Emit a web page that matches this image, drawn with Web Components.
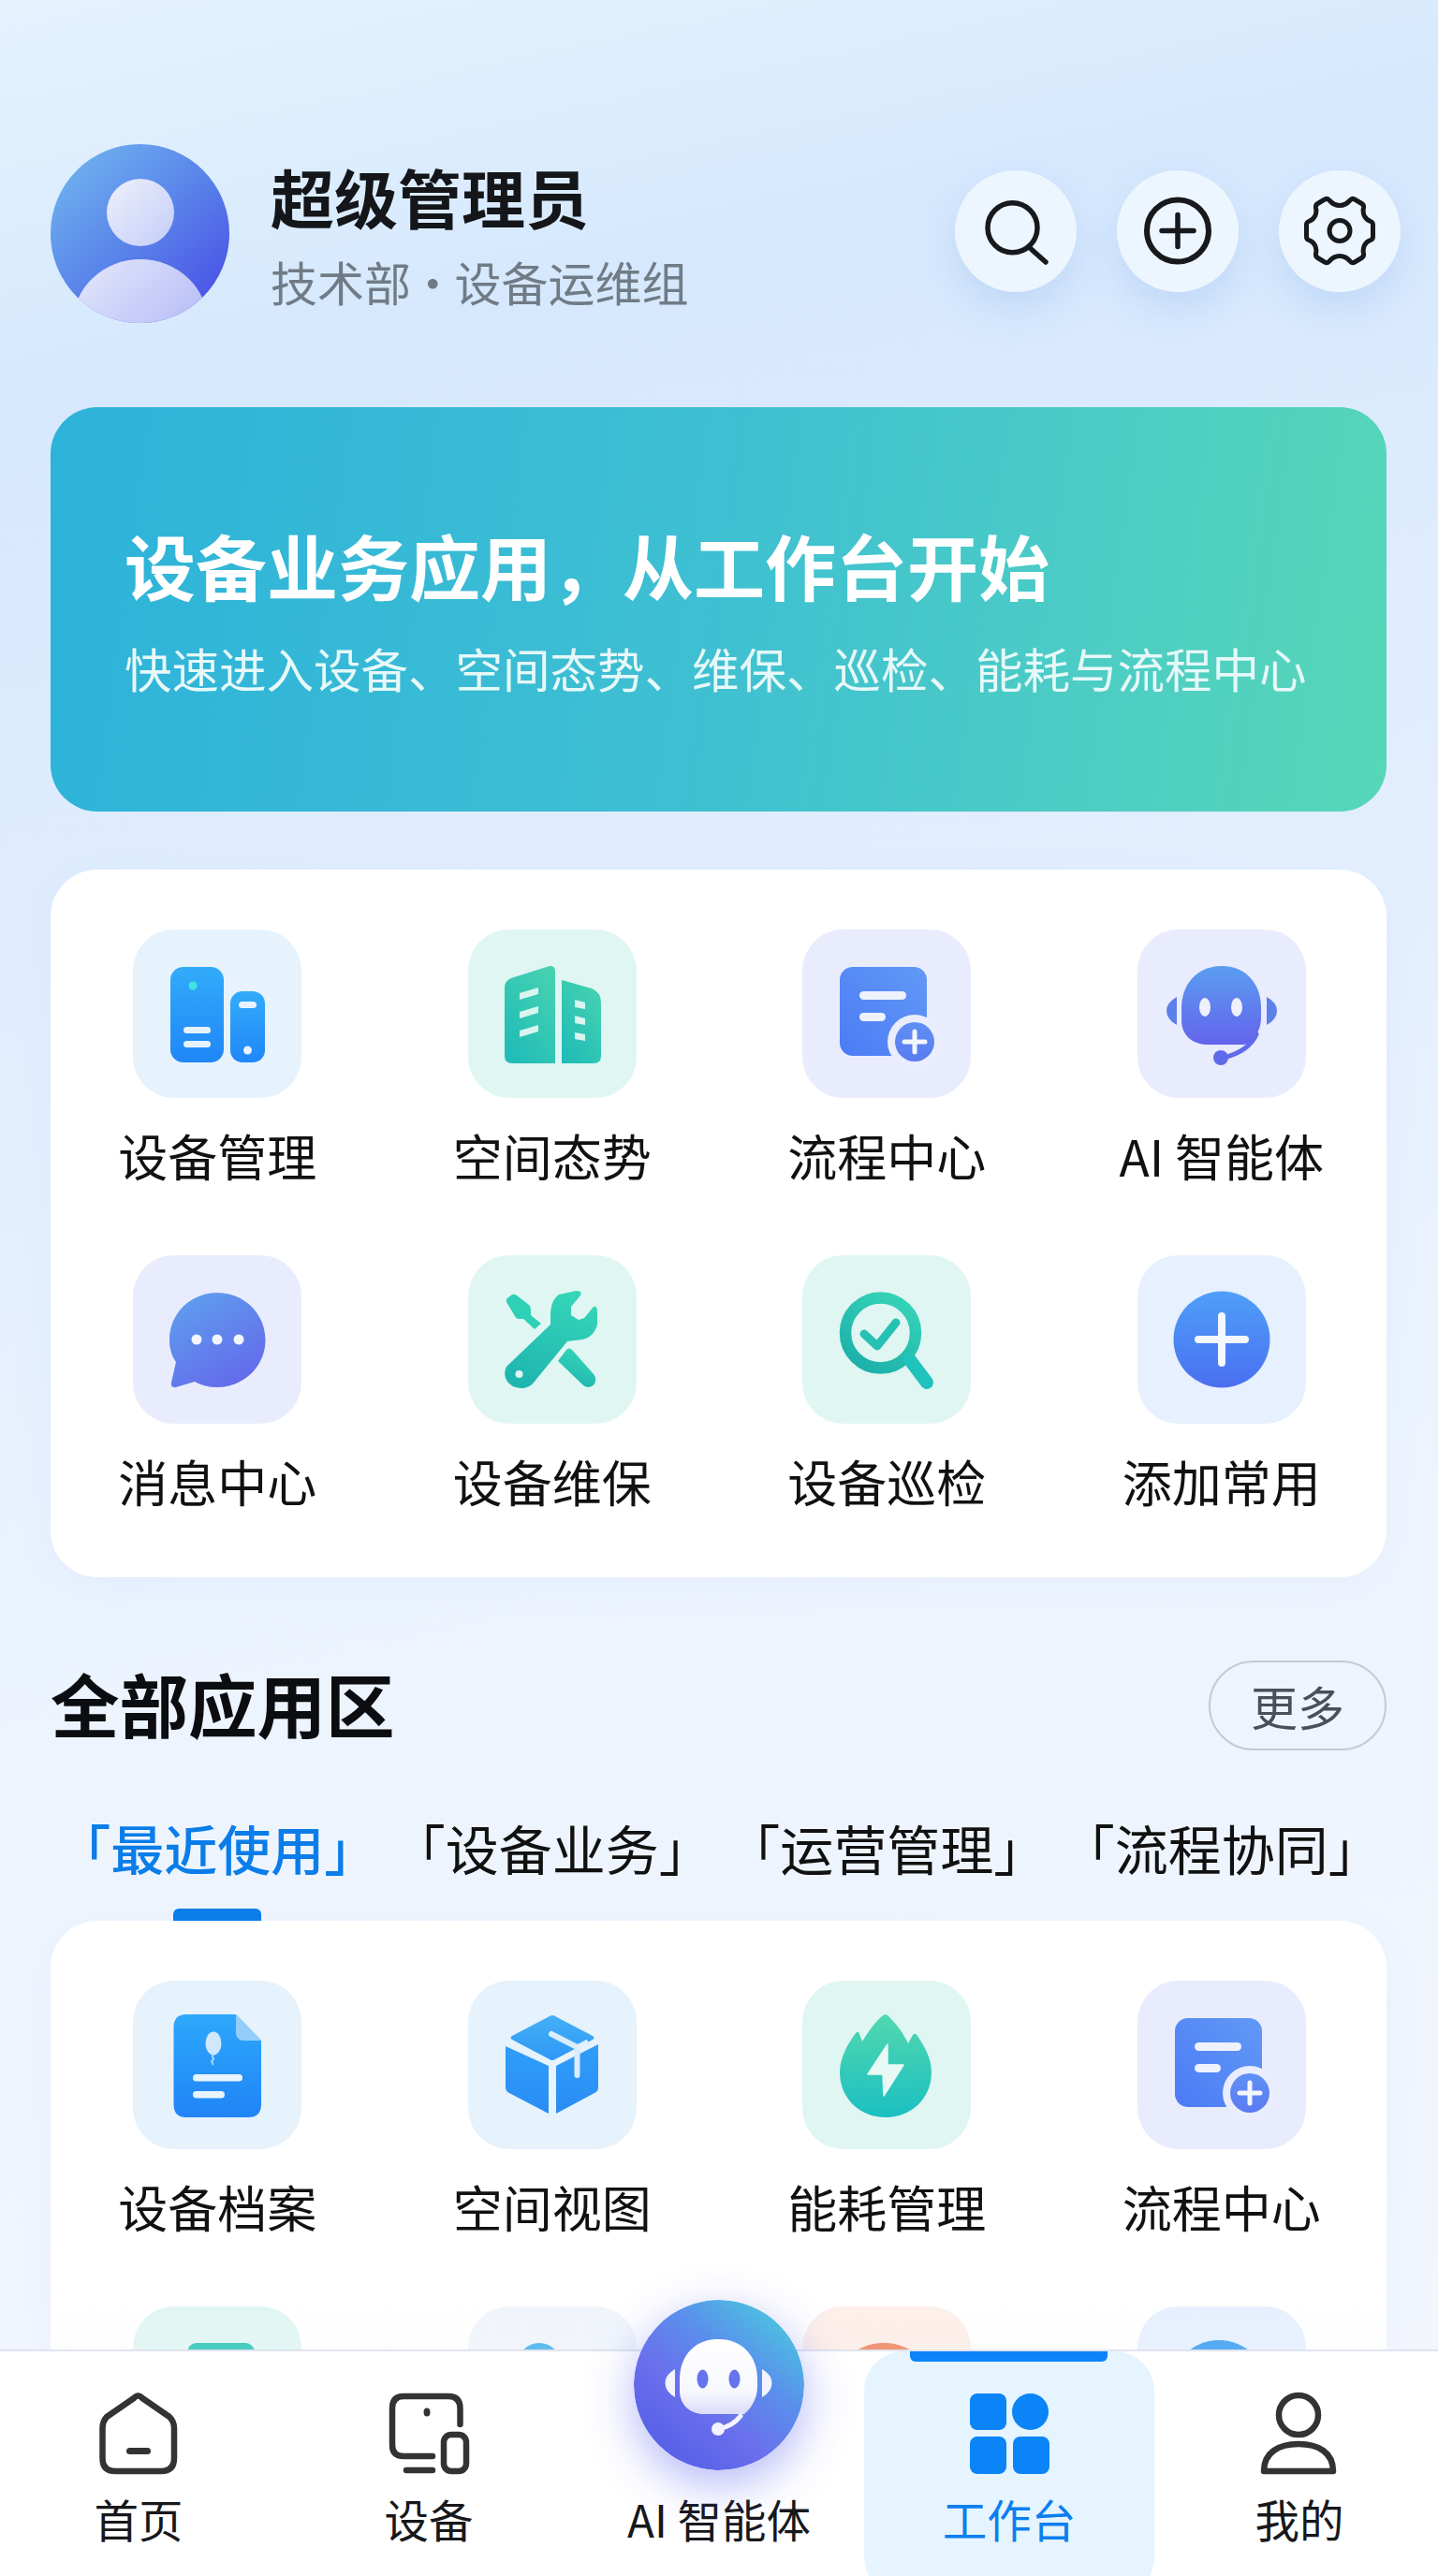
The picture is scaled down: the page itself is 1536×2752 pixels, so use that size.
<!DOCTYPE html>
<html lang="zh">
<head>
<meta charset="utf-8">
<title>工作台</title>
<style>
  html, body { margin: 0; padding: 0; }
  body { font-family: "Noto Sans CJK SC", "Liberation Sans", sans-serif; color: #111; }
</style>
</head>
<body>
<work-page>
  <user-head name="超级管理员" dept="技术部 · 设备运维组"></user-head>
  <hero-banner title="设备业务应用，从工作台开始" sub="快速进入设备、空间态势、维保、巡检、能耗与流程中心"></hero-banner>
  <tile-card class="first">
    <app-tile icon="device" tone="blue">设备管理</app-tile>
    <app-tile icon="building" tone="teal">空间态势</app-tile>
    <app-tile icon="flow" tone="violet">流程中心</app-tile>
    <app-tile icon="robot" tone="violet">AI 智能体</app-tile>
    <app-tile icon="chat" tone="violet">消息中心</app-tile>
    <app-tile icon="tools" tone="teal">设备维保</app-tile>
    <app-tile icon="inspect" tone="teal">设备巡检</app-tile>
    <app-tile icon="add" tone="sky">添加常用</app-tile>
  </tile-card>
  <section-head title="全部应用区" action="更多"></section-head>
  <tab-bar>
    <tab-item active>「最近使用」</tab-item>
    <tab-item>「设备业务」</tab-item>
    <tab-item>「运营管理」</tab-item>
    <tab-item>「流程协同」</tab-item>
  </tab-bar>
  <tile-card>
    <app-tile icon="archive" tone="blue">设备档案</app-tile>
    <app-tile icon="box" tone="blue">空间视图</app-tile>
    <app-tile icon="flame" tone="teal">能耗管理</app-tile>
    <app-tile icon="flow" tone="violet">流程中心</app-tile>
    <app-tile icon="peek1" tone="teal"></app-tile>
    <app-tile icon="peek2" tone="pale"></app-tile>
    <app-tile icon="peek3" tone="peach"></app-tile>
    <app-tile icon="peek4" tone="sky"></app-tile>
  </tile-card>
  <bottom-nav>
    <nav-item icon="home">首页</nav-item>
    <nav-item icon="devices">设备</nav-item>
    <nav-item icon="ai">AI 智能体</nav-item>
    <nav-item icon="grid" active>工作台</nav-item>
    <nav-item icon="user">我的</nav-item>
  </bottom-nav>
</work-page>

<script>
const grad = (id, a, b, x1 = 0, y1 = 0, x2 = 0, y2 = 1) => `
  <linearGradient id="${id}" x1="${x1}" y1="${y1}" x2="${x2}" y2="${y2}">
    <stop offset="0" stop-color="${a}"/><stop offset="1" stop-color="${b}"/>
  </linearGradient>`

const robotHead = 'M90 39C115 39 132 57 132 84V94C132 103 129 110 124 117C121 121 117 123 112 123H74C58 123 47 112 47 97V84C47 57 65 39 90 39Z'
const flowDoc = `
  <defs>${grad('a', '#4c7bf5', '#6199f6', 0, 1, 1, 0)}${grad('b', '#5f90f5', '#5a7bf1')}</defs>
  <rect x="40" y="40" width="93" height="95" rx="14" fill="url(#a)"/>
  <rect x="61" y="66" width="50" height="9" rx="4.5" fill="#eef2fd"/>
  <rect x="61" y="89" width="28" height="9" rx="4.5" fill="#eef2fd"/>
  <circle cx="120" cy="120" r="29" fill="#e9edfd"/>
  <circle cx="120" cy="120" r="21" fill="url(#b)"/>
  <path d="M109 120H131M120 109V131" stroke="#f3f6fe" stroke-width="5" stroke-linecap="round"/>`

// every icon is drawn on a 180 box, the same size as its tile
const icons = {
  device: `
    <defs>${grad('a', '#33abfa', '#2086f7')}</defs>
    <rect x="40" y="40" width="57" height="102" rx="14" fill="url(#a)"/>
    <rect x="104" y="66" width="37" height="76" rx="13" fill="url(#a)"/>
    <circle cx="64" cy="60" r="4.5" fill="#3fe3e2"/>
    <rect x="54" y="104" width="29" height="7" rx="3.5" fill="#e6f3fe"/>
    <rect x="54" y="119" width="29" height="7" rx="3.5" fill="#e6f3fe"/>
    <rect x="113" y="77" width="19" height="7" rx="3.5" fill="#e6f3fe"/>
    <circle cx="122.500" cy="129" r="4.5" fill="#e6f3fe"/>`,
  building: `
    <defs>${grad('a', '#49d4b0', '#22bdb7', 1, 0, 0.3, 1)}</defs>
    <path d="M39 62Q39 55 46 52L87 39Q93 38 93 45V143H47Q39 143 39 135Z" fill="url(#a)"/>
    <path d="M100 54L132 63Q142 67 142 78V135Q142 143 134 143H100Z" fill="url(#a)"/>
    <g fill="#d9f5ef">
      <path d="M55 68L75 62V69L55 75Z"/><path d="M55 88L75 82V89L55 95Z"/><path d="M55 108L75 102V109L55 115Z"/>
      <path d="M114 75L125 78V85L114 83Z"/><path d="M114 92L125 95V102L114 100Z"/><path d="M114 110L125 112V119L114 117Z"/>
    </g>`,
  flow: flowDoc,
  robot: `
    <defs>${grad('a', '#5b9df0', '#6464ec')}${grad('b', '#5a90ee', '#5d6cea')}</defs>
    <path d="M42 72V102Q31 96 31 87Q31 78 42 72Z" fill="#5c80ea"/>
    <path d="M138 72V102Q149 96 149 87Q149 78 138 72Z" fill="#5c80ea"/>
    <path d="${robotHead}" fill="url(#a)"/>
    <path d="M127 112Q119 130 92 137" fill="none" stroke="#5f6bea" stroke-width="5" stroke-linecap="round"/>
    <circle cx="89" cy="137" r="8" fill="#5f6bea"/>
    <ellipse cx="72" cy="83" rx="6" ry="10" fill="#eef0fd"/>
    <ellipse cx="106" cy="83" rx="6" ry="10" fill="#eef0fd"/>`,
  chat: `
    <defs>${grad('a', '#5f9eef', '#6467ea', 0.2, 0, 0.8, 1)}</defs>
    <path d="M90 40C118 40 141.500 62 141.500 90.500S118 141 90 141C81 141 73 139 66 135L46 141Q40 142 41 136L46 114C41 107 39 99 39 90.500C39 62 62 40 90 40Z" fill="url(#a)"/>
    <circle cx="68" cy="90" r="5.5" fill="#f2f5fe"/><circle cx="90" cy="90" r="5.5" fill="#f2f5fe"/><circle cx="113" cy="90" r="5.5" fill="#f2f5fe"/>`,
  tools: `
    <defs>${grad('a', '#35d6b8', '#1fb5b0', 0.7, 0, 0.3, 1)}</defs>
    <path d="M41 119L88 74V64C88 54 91 46 97 42L115 38Q123 38 120 43L110 55V64L118 69L124 67L134 55Q138 54 138 60V74C136 82 130 89 122 90L106 92L70 136C62 146 44 143 40 131Q38 125 41 119Z" fill="url(#a)"/>
    <circle cx="54.500" cy="127" r="4" fill="#dff6f2"/>
    <path d="M41 50Q40 47 43 45L47 42Q50 41 52 43L65 53Q67 55 67 58L67 64L78 73L71 79L59 68H53Q51 67 50 65Z" fill="#2fd0b6"/>
    <path d="M96 113L105 101Q108 98 111 101L134 127C141 136 130 146 122 138L96 113Z" fill="url(#a)"/>`,
  inspect: `
    <defs>${grad('a', '#35d3b8', '#1cb0a9', 0.8, 0, 0.2, 1)}</defs>
    <circle cx="83.500" cy="83" r="37.500" fill="none" stroke="url(#a)" stroke-width="12.500"/>
    <path d="M115 112L133 136" stroke="#1fc3bb" stroke-width="14" stroke-linecap="round"/>
    <path d="M66 84L80 97L100 72" fill="none" stroke="#27c1b3" stroke-width="9" stroke-linecap="round" stroke-linejoin="round"/>`,
  add: `
    <defs>${grad('a', '#4f9ff9', '#4a6ff0')}</defs>
    <circle cx="90" cy="90" r="51.500" fill="url(#a)"/>
    <path d="M65 90H115M90 65V115" stroke="#f3f7fe" stroke-width="8" stroke-linecap="round"/>`,
  archive: `
    <defs>${grad('a', '#2da8fb', '#2084f7')}</defs>
    <path d="M57 36H110L137 64V132Q137 146 123 146H57Q43.500 146 43.500 132V50Q43.500 36 57 36Z" fill="url(#a)"/>
    <path d="M110 36L137 64H119Q110 64 110 55Z" fill="#93cdfa"/>
    <ellipse cx="86" cy="67" rx="8.500" ry="12.500" fill="#cfe8fd"/>
    <path d="M86 79C82 82 89 83 85 85C82 87 87 88 85 90" fill="none" stroke="#cfe8fd" stroke-width="1.500"/>
    <rect x="64" y="100" width="53" height="7.500" rx="3.700" fill="#e8f4fe"/>
    <rect x="64" y="118" width="34" height="7.500" rx="3.700" fill="#e8f4fe"/>`,
  box: `
    <defs>${grad('a', '#44b0f6', '#2e97f6')}${grad('b', '#2f9ef8', '#2a8cf5')}</defs>
    <path d="M87 38Q90 36 93 38L133 59Q136 61 133 63L93 84Q90 86 87 84L47 63Q44 61 47 59Z" fill="url(#a)"/>
    <path d="M40 70L86 91V142L44 120Q40 118 40 114Z" fill="url(#b)"/>
    <path d="M94 91L139 68V114Q139 118 135 120L94 142Z" fill="url(#b)"/>
    <path d="M89 57L116.500 71V101" fill="none" stroke="#d9edfc" stroke-width="6" stroke-linecap="round" stroke-linejoin="round"/>
    <path d="M116.500 71L128 65" stroke="#e2f1fc" stroke-width="5"/>`,
  flame: `
    <defs>${grad('a', '#52d8ae', '#1bbfc2')}</defs>
    <path d="M88 36Q91 36 94 40C101 47 108 56 113 67L118 58Q121 55 123 59C131 71 138 83 138 98C138 125 117 146 89 146C61 146 40 125 40 98C40 83 48 68 57 56Q60 53 61 57L64 65C70 55 78 44 85 38Z" fill="url(#a)"/>
    <path d="M91 68L70 100H86L87 123L108 90H91Z" fill="#e9f9f5" stroke="#e9f9f5" stroke-width="1.500" stroke-linejoin="round"/>`,
  peek1: '<rect x="58" y="39" width="72" height="120" rx="10" fill="#2ec4b6"/>',
  peek2: '<circle cx="76" cy="62" r="23" fill="#46b2ea"/>',
  peek3: '<circle cx="87" cy="97" r="58" fill="#ee8560"/>',
  peek4: '<circle cx="87" cy="88" r="52" fill="#3c9ff2"/>'
}

class IconArt extends HTMLElement {
  connectedCallback() {
    const name = this.getAttribute('name')
    this.attachShadow({mode: 'open'}).innerHTML = `
      <style>:host { display: block; width: 100%; height: 100%; } svg { display: block; width: 100%; height: 100%; }</style>
      <svg viewBox="0 0 180 180" xmlns="http://www.w3.org/2000/svg">${icons[name]}</svg>
    `
  }
}

class WorkPage extends HTMLElement {
  connectedCallback() {
    this.attachShadow({mode: 'open'}).innerHTML = `
      <style>
        :host {
          display: block;
          position: relative;
          width: 1536px;
          height: 2752px;
          overflow: hidden;
          box-sizing: border-box;
          padding: 154px 55px 0 54px;
          background: linear-gradient(168deg, #e4f3fe 0%, #d6e8fd 14%, #e0edfe 34%, #edf4fe 62%, #f3f6fd 100%);
        }
      </style>
      <slot></slot>
    `
  }
}

class UserHead extends HTMLElement {
  connectedCallback() {
    const btn = (inner) => `<div class="btn"><svg viewBox="0 0 84 84" fill="none" stroke="#17191d" stroke-linecap="round">${inner}</svg></div>`
    this.attachShadow({mode: 'open'}).innerHTML = `
      <style>
        :host { display: flex; align-items: center; margin: 0 -15px 90px 0; height: 191px; }
        .avatar { width: 191px; height: 191px; flex: none; }
        .info { margin-left: 44px; flex: 1; }
        .name { font-size: 68px; line-height: 90px; font-weight: 700; color: #14161a; }
        .dept { font-size: 50px; line-height: 70px; color: #707b86; margin-top: 10px; word-spacing: -13px; }
        .btns { display: flex; gap: 43px; margin-top: -6px; }
        .btn {
          width: 130px; height: 130px; border-radius: 50%;
          background: #edf6fe;
          box-shadow: 0 18px 40px rgba(128, 172, 232, .28);
          display: flex; align-items: center; justify-content: center;
        }
        .btn svg { width: 84px; height: 84px; }
      </style>
      <svg class="avatar" viewBox="0 0 191 191">
        <defs>
          <linearGradient id="bg" x1="0.1" y1="0.05" x2="0.9" y2="0.9">
            <stop offset="0" stop-color="#70b2ef"/><stop offset=".5" stop-color="#5a85ea"/><stop offset="1" stop-color="#4a52e6"/>
          </linearGradient>
          <linearGradient id="head" x1="0" y1="0" x2="1" y2="1"><stop offset="0" stop-color="#eef0fb"/><stop offset="1" stop-color="#c3cdf8"/></linearGradient>
          <linearGradient id="body" x1="0" y1="0" x2="1" y2="1"><stop offset="0" stop-color="#e6e9fb"/><stop offset="1" stop-color="#a4abf5"/></linearGradient>
          <clipPath id="clip"><circle cx="95.500" cy="95.500" r="95.500"/></clipPath>
        </defs>
        <circle cx="95.500" cy="95.500" r="95.500" fill="url(#bg)"/>
        <circle cx="96" cy="73" r="36" fill="url(#head)"/>
        <ellipse cx="96" cy="191" rx="72" ry="68" fill="url(#body)" clip-path="url(#clip)"/>
      </svg>
      <div class="info">
        <div class="name">${this.getAttribute('name')}</div>
        <div class="dept">${this.getAttribute('dept')}</div>
      </div>
      <div class="btns">
        ${btn('<circle cx="38.500" cy="38.300" r="26.500" stroke-width="5.500"/><path d="M58 60.700L74 75" stroke-width="5.500"/>')}
        ${btn('<circle cx="42" cy="41.500" r="33" stroke-width="6"/><path d="M25 41.500H59M42 24.500V58.500" stroke-width="5.500"/>')}
        ${btn('<g transform="translate(42 41.500)" stroke-width="5" stroke-linejoin="round"><path d="M0 -27C5 -27 8 -29 11 -32.500Q13 -35 16 -33.500L23.500 -29Q26 -27.500 25.500 -24.500C24 -18 27 -12 33 -10Q35.500 -9 35.500 -6.500V6.500Q35.500 9 33 10C27 12 24 18 25.500 24.500Q26 27.500 23.500 29L16 33.500Q13 35 11 32.500C8 29 5 27 0 27C-5 27 -8 29 -11 32.500Q-13 35 -16 33.500L-23.500 29Q-26 27.500 -25.500 24.500C-24 18 -27 12 -33 10Q-35.500 9 -35.500 6.500V-6.500Q-35.500 -9 -33 -10C-27 -12 -24 -18 -25.500 -24.500Q-26 -27.500 -23.500 -29L-16 -33.500Q-13 -35 -11 -32.500C-8 -29 -5 -27 0 -27Z"/><circle r="11"/></g>')}
      </div>
    `
  }
}

class HeroBanner extends HTMLElement {
  connectedCallback() {
    this.attachShadow({mode: 'open'}).innerHTML = `
      <style>
        :host {
          display: block;
          height: 432px;
          box-sizing: border-box;
          padding: 118px 40px 0 79px;
          border-radius: 50px;
          color: #fff;
          background: linear-gradient(98deg, #2db2da 0%, #3fc0d2 50%, #57d7b8 100%);
        }
        .title { font-size: 76px; line-height: 100px; font-weight: 700; }
        .sub { font-size: 50.500px; line-height: 70px; margin-top: 25px; color: #e6f8f8; white-space: nowrap; }
      </style>
      <div class="title">${this.getAttribute('title')}</div>
      <div class="sub">${this.getAttribute('sub')}</div>
    `
  }
}

class TileCard extends HTMLElement {
  connectedCallback() {
    const first = this.classList.contains('first')
    this.attachShadow({mode: 'open'}).innerHTML = `
      <style>
        :host {
          display: grid;
          grid-template-columns: repeat(4, 357.5px);
          align-content: start;
          row-gap: 66px;
          box-sizing: border-box;
          padding: 64px 0 ${first ? 62 : 0}px;
          margin-top: ${first ? 62 : 0}px;
          border-radius: 50px;
          background: #fff;
          box-shadow: 0 10px 40px rgba(140, 175, 230, .06);
          position: relative;
          ${first ? '' : 'height: 900px;'}
        }
      </style>
      <slot></slot>
    `
  }
}

class AppTile extends HTMLElement {
  connectedCallback() {
    const tones = {blue: '#e6f2fc', teal: '#e0f6f3', violet: '#e9ecfd', sky: '#e6f0fe', pale: '#f0f5fb', peach: '#fdeee8'}
    this.attachShadow({mode: 'open'}).innerHTML = `
      <style>
        :host { display: flex; flex-direction: column; align-items: center; margin-left: -1px; }
        .tile { width: 180px; height: 180px; border-radius: 44px; background: ${tones[this.getAttribute('tone')]}; }
        .label { font-size: 53px; line-height: 82px; margin-top: 20px; color: #111; white-space: nowrap; }
      </style>
      <div class="tile"><icon-art name="${this.getAttribute('icon')}"></icon-art></div>
      <div class="label"><slot></slot></div>
    `
  }
}

class SectionHead extends HTMLElement {
  connectedCallback() {
    this.attachShadow({mode: 'open'}).innerHTML = `
      <style>
        :host { display: flex; align-items: center; justify-content: space-between; margin-top: 89px; height: 96px; }
        .title { font-size: 73.500px; font-weight: 700; color: #0c0d10; line-height: 96px; margin-top: -6px; }
        .more {
          width: 190px; height: 96px; box-sizing: border-box;
          border: 2px solid #c3cad3; border-radius: 48px;
          display: flex; align-items: center; justify-content: center;
          font-size: 50px; color: #4a505a;
        }
      </style>
      <div class="title">${this.getAttribute('title')}</div>
      <div class="more">${this.getAttribute('action')}</div>
    `
  }
}

class TabBar extends HTMLElement {
  connectedCallback() {
    this.attachShadow({mode: 'open'}).innerHTML = `
      <style>
        :host { display: grid; grid-template-columns: repeat(4, 357.5px); margin-top: 63px; height: 119px; }
      </style>
      <slot></slot>
    `
  }
}

class TabItem extends HTMLElement {
  connectedCallback() {
    const active = this.hasAttribute('active')
    this.attachShadow({mode: 'open'}).innerHTML = `
      <style>
        :host { display: flex; flex-direction: column; align-items: center; margin-left: -1px; }
        .text { font-size: 57px; line-height: 80px; white-space: nowrap; color: ${active ? '#0b7de9' : '#111'}; font-weight: ${active ? 500 : 400}; }
        .mark { width: 94px; height: 13px; margin-top: 26px; border-radius: 6px 6px 0 0; background: ${active ? '#0b7de9' : 'transparent'}; }
      </style>
      <div class="text"><slot></slot></div>
      <div class="mark"></div>
    `
  }
}

class BottomNav extends HTMLElement {
  connectedCallback() {
    this.attachShadow({mode: 'open'}).innerHTML = `
      <style>
        :host {
          position: absolute;
          left: 0; right: 0; bottom: 0;
          height: 242px;
          background: #fff;
          border-top: 2px solid #e0e3ee;
          box-sizing: border-box;
        }
        :host::before {
          content: '';
          position: absolute;
          left: 0; right: 0; top: -62px; height: 60px;
          background: linear-gradient(180deg, rgba(246, 247, 252, 0), rgba(246, 247, 252, .15));
        }
        .row { display: grid; grid-template-columns: repeat(5, 310px); margin: 0 -7px; height: 100%; position: relative; }
      </style>
      <div class="row"><slot></slot></div>
    `
  }
}

const navIcons = {
  home: `<g fill="none" stroke="#333336" stroke-width="6.500" stroke-linecap="round" stroke-linejoin="round">
      <path d="M40 8Q44.500 3 49 8L78 28Q83 33 83 40V72Q83 86 69 86H20Q6.500 86 6.500 72V40Q6.500 33 11 28Z" />
      <path d="M35.500 64.500H54.500" stroke-width="7"/></g>`,
  devices: `<g fill="none" stroke="#333336" stroke-width="6.500" stroke-linecap="round" stroke-linejoin="round">
      <path d="M78.500 36V19Q78.500 6 66 6H18Q6 6 6 19V58Q6 70 18 70H49"/>
      <path d="M21 85H49"/><rect x="61" y="47" width="24" height="39" rx="8"/></g>
      <ellipse cx="43" cy="23" rx="3.500" ry="4.500" fill="#333336"/>`,
  grid: `<g fill="#0a84f6"><rect x="3" y="3" width="39" height="39" rx="8"/><circle cx="67.500" cy="22.500" r="19.500"/>
      <rect x="3" y="49" width="39" height="40" rx="8"/><rect x="49" y="49" width="39" height="40" rx="8"/></g>`,
  user: `<g fill="none" stroke="#333336" stroke-width="6.500" stroke-linejoin="round">
      <circle cx="44" cy="26" r="21"/><path d="M7 86C7 66 23 57 44 57S81 66 81 86Z"/></g>`
}

class NavItem extends HTMLElement {
  connectedCallback() {
    const icon = this.getAttribute('icon')
    const active = this.hasAttribute('active')
    const art = icon === 'ai'
      ? `<svg class="ai" viewBox="0 0 182 182">
          <defs>
            <linearGradient id="ring" x1="0.85" y1="0.05" x2="0.2" y2="0.85">
              <stop offset="0" stop-color="#4bc6df"/><stop offset=".38" stop-color="#5a8fec"/><stop offset=".7" stop-color="#6a70ec"/><stop offset="1" stop-color="#5a62e8"/>
            </linearGradient>
            <linearGradient id="face" x1="0" y1="0" x2="0" y2="1"><stop offset="0" stop-color="#fff"/><stop offset=".7" stop-color="#f7f8fe"/><stop offset="1" stop-color="#d9dcf8"/></linearGradient>
          </defs>
          <circle cx="91" cy="91" r="91" fill="url(#ring)"/>
          <path d="M44 74V104Q33.500 98 33.500 89Q33.500 80 44 74Z" fill="#f1f3fe"/>
          <path d="M137 74V104Q147.500 98 147.500 89Q147.500 80 137 74Z" fill="#f1f3fe"/>
          <path d="M90.500 42C116 42 132 60 132 85V92C132 104 127 114 118 122H75C60 122 49 112 49 97V85C49 60 65 42 90.500 42Z" fill="url(#face)"/>
          <path d="M114 124Q106 135 90 138" fill="none" stroke="#f3f4fe" stroke-width="5" stroke-linecap="round"/>
          <circle cx="90" cy="138" r="7" fill="#f3f4fe"/>
          <ellipse cx="73.500" cy="84.500" rx="6" ry="10" fill="#6673ea"/>
          <ellipse cx="107.500" cy="84.500" rx="6" ry="10" fill="#6673ea"/>
        </svg>`
      : `<svg class="ico" viewBox="0 0 90 90">${navIcons[icon]}</svg>`
    this.attachShadow({mode: 'open'}).innerHTML = `
      <style>
        :host { display: flex; flex-direction: column; align-items: center; position: relative; box-sizing: border-box; padding-top: 42px; }
        :host([active]) { background: #e5f4fe; border-radius: 42px; margin-bottom: -22px; }
        :host([active])::before {
          content: ''; position: absolute; left: 49px; top: 0; width: 211px; height: 11px;
          background: #0a84f6; border-radius: 0 0 6px 6px;
        }
        .ico { width: 90px; height: 90px; display: block; }
        .slot { height: 90px; width: 90px; }
        .ai {
          position: absolute; left: 64px; top: -55px; width: 182px; height: 182px; border-radius: 50%;
          box-shadow: 0 16px 50px rgba(92, 100, 240, .45);
        }
        .label { font-size: 47.500px; line-height: 60px; margin-top: 17px; white-space: nowrap; color: ${active ? '#0a7fee' : '#17181b'}; }
      </style>
      ${icon === 'ai' ? `<div class="slot"></div>${art}` : art}
      <div class="label"><slot></slot></div>
    `
  }
}

window.customElements.define('icon-art', IconArt)
window.customElements.define('work-page', WorkPage)
window.customElements.define('user-head', UserHead)
window.customElements.define('hero-banner', HeroBanner)
window.customElements.define('tile-card', TileCard)
window.customElements.define('app-tile', AppTile)
window.customElements.define('section-head', SectionHead)
window.customElements.define('tab-bar', TabBar)
window.customElements.define('tab-item', TabItem)
window.customElements.define('bottom-nav', BottomNav)
window.customElements.define('nav-item', NavItem)
</script>
</body>
</html>
